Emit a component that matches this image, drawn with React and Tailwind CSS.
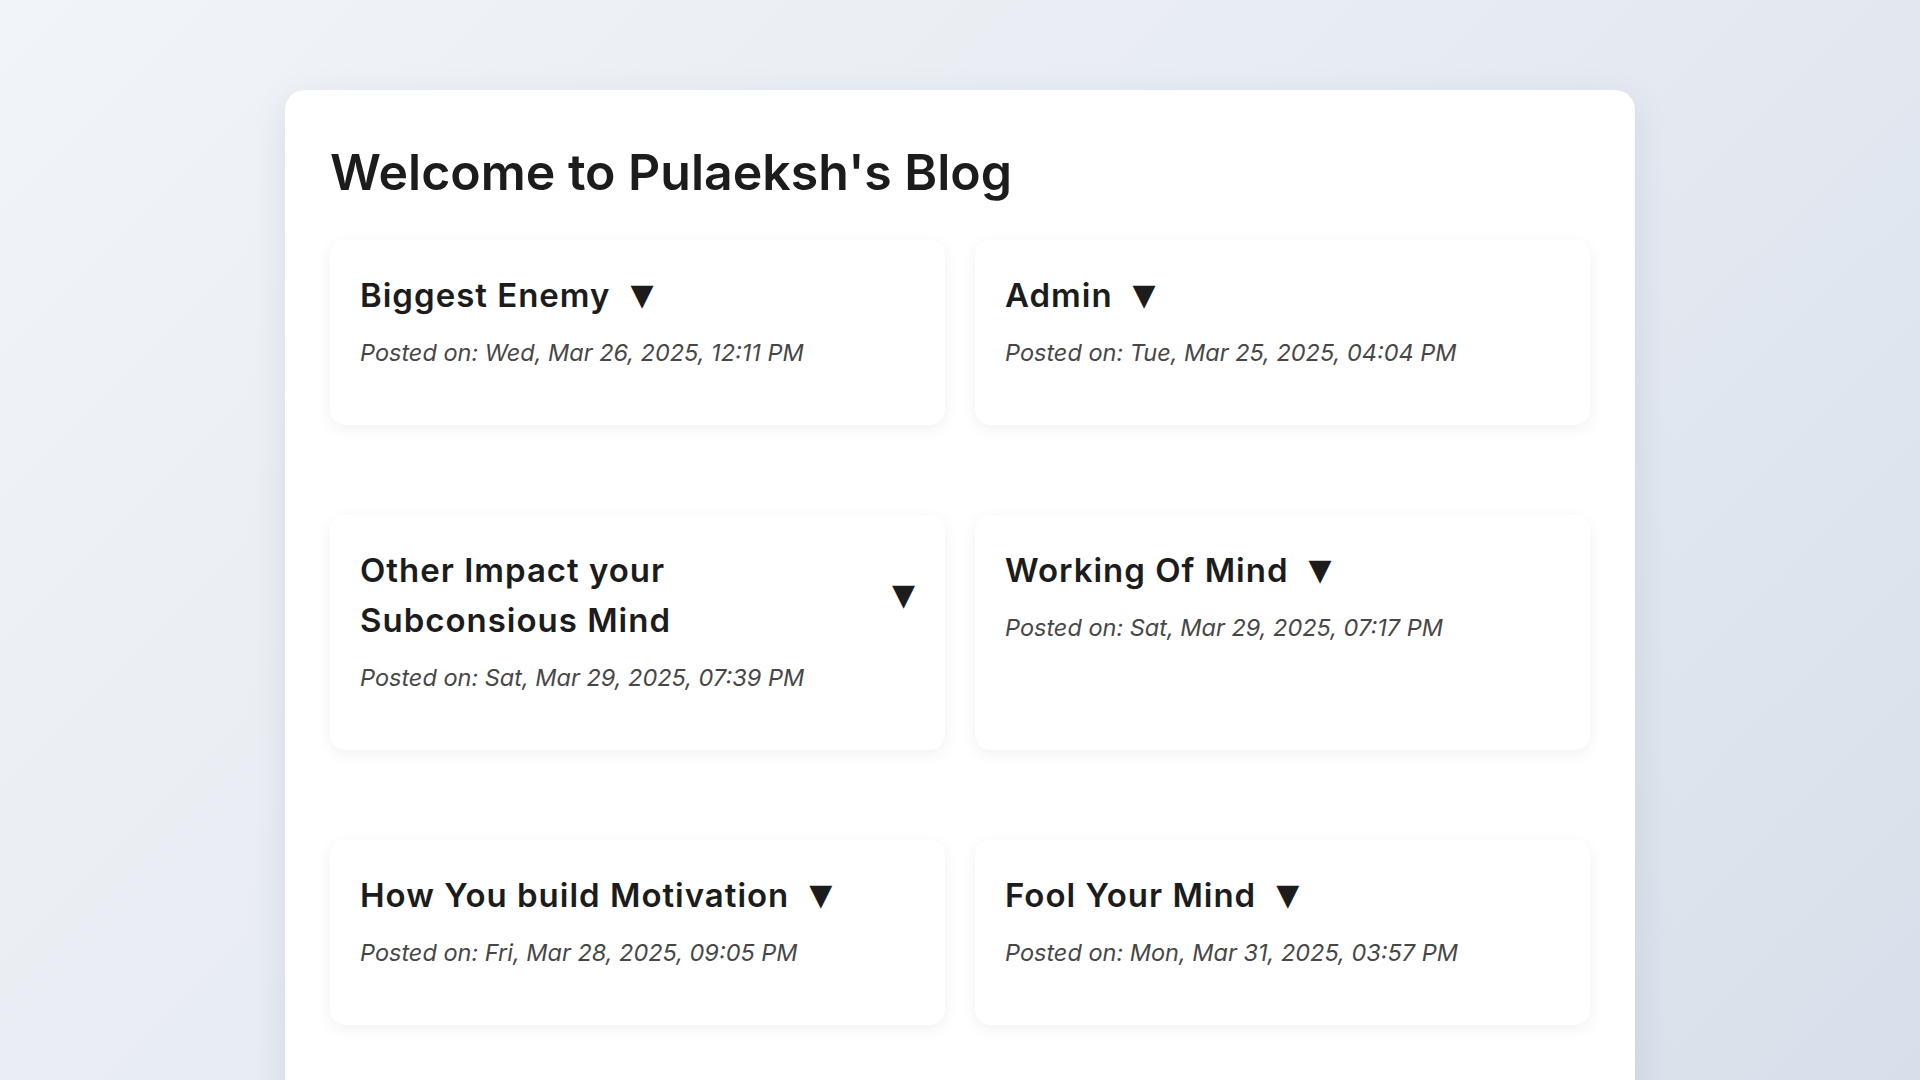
import React from "react";

const posts = [
  { title: "Biggest Enemy", date: "Posted on: Wed, Mar 26, 2025, 12:11 PM" },
  { title: "Admin", date: "Posted on: Tue, Mar 25, 2025, 04:04 PM" },
  { title: "Other Impact your Subconsious Mind", date: "Posted on: Sat, Mar 29, 2025, 07:39 PM" },
  { title: "Working Of Mind", date: "Posted on: Sat, Mar 29, 2025, 07:17 PM" },
  { title: "How You build Motivation", date: "Posted on: Fri, Mar 28, 2025, 09:05 PM" },
  { title: "Fool Your Mind", date: "Posted on: Mon, Mar 31, 2025, 03:57 PM" },
];

function PostCard({ title, date }) {
  return (
    <div className="rounded-[15px] bg-white px-[30px] pt-[30px] pb-[54px] shadow-[0_4px_16px_rgba(0,0,0,0.06)]">
      <div className="flex items-center">
        <h2 className="text-[33px] leading-[50px] font-semibold tracking-[0.03em] text-[#1c1c1c]">{title}</h2>
        <span className="ml-[20px] shrink-0 font-['DejaVu_Sans',sans-serif] text-[30px] leading-none text-[#1c1c1c]">
          ▼
        </span>
      </div>
      <p className="mt-[15px] text-[23.5px] leading-[36px] italic text-[#474747]">{date}</p>
    </div>
  );
}

export default function App() {
  return (
    <div className="min-h-screen bg-[linear-gradient(135deg,#f1f4f8_0%,#e6ebf2_50%,#d6dee9_100%)] pt-[90px] pb-[60px] font-['Inter',sans-serif]">
      <div className="mx-auto w-[1350px] rounded-[20px] bg-white px-[45px] pt-[45px] pb-[140px] shadow-[0_10px_35px_rgba(30,50,80,0.10)]">
        <h1 className="mb-[30px] text-[50px] leading-[75px] font-semibold text-[#1c1c1c]">
          Welcome to Pulaeksh's Blog
        </h1>
        <div className="grid grid-cols-2 gap-x-[30px] gap-y-[90px]">
          {posts.map((p) => (
            <PostCard key={p.title} title={p.title} date={p.date} />
          ))}
        </div>
      </div>
    </div>
  );
}
